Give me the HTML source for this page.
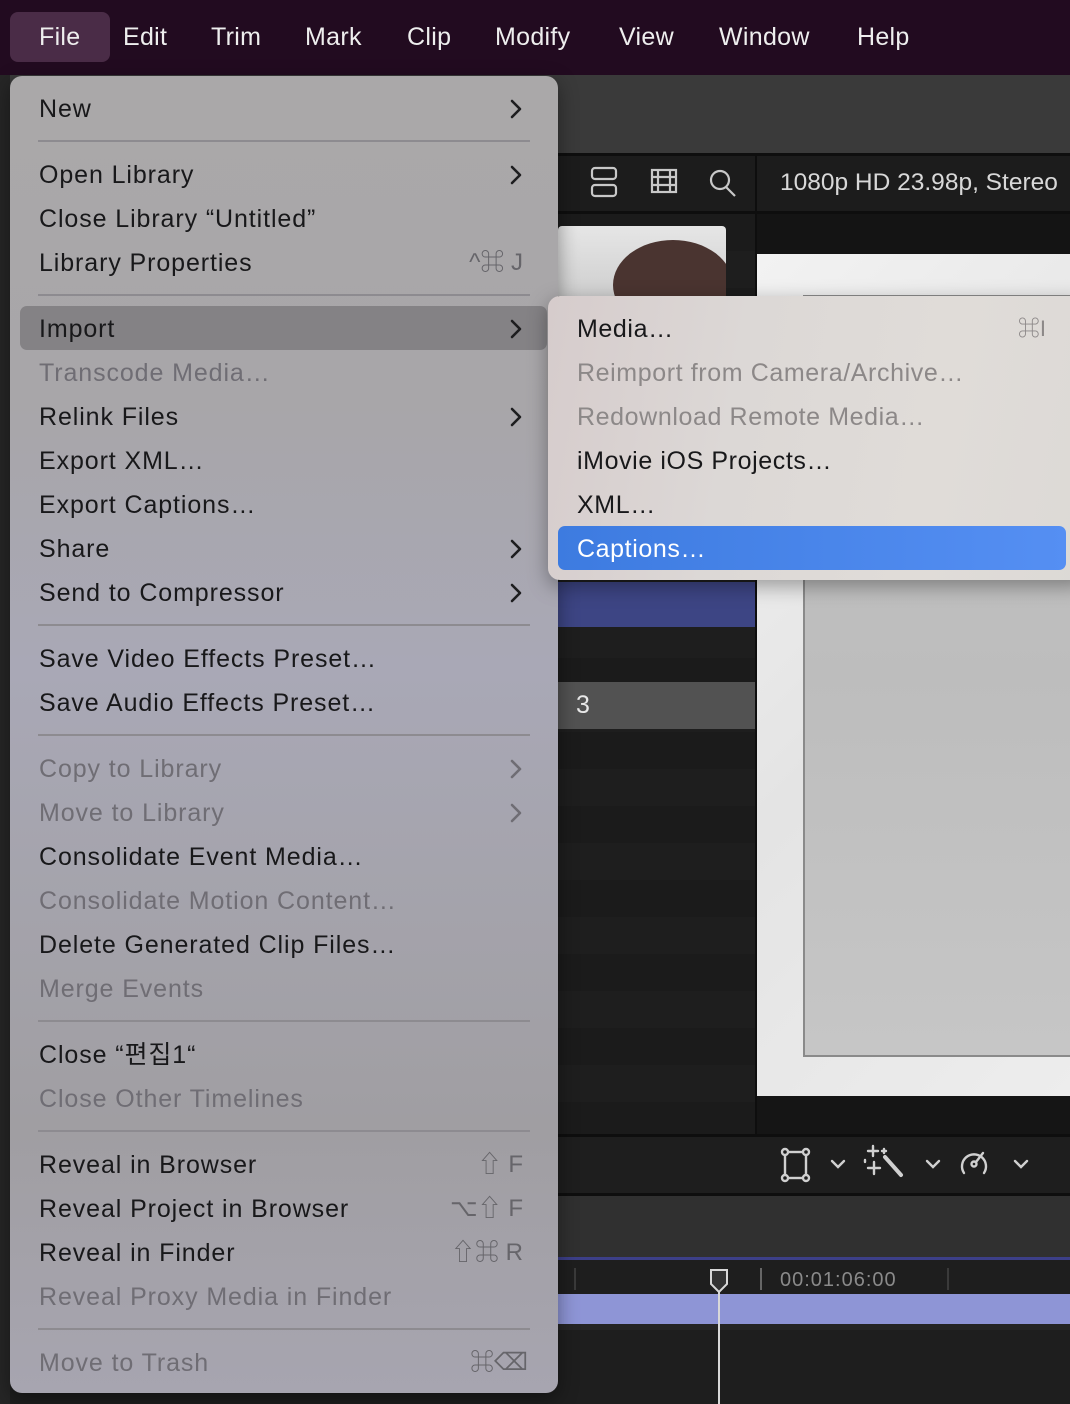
<!DOCTYPE html>
<html><head><meta charset="utf-8">
<style>
*{margin:0;padding:0;box-sizing:border-box}
body{width:1070px;height:1404px;overflow:hidden;position:relative;background:#1e1e1e;font-family:"Liberation Sans","Noto Sans CJK KR",sans-serif}
.a{position:absolute}
.mb{left:0;top:0;width:1070px;height:75px;background:#220b20}
.mb span{position:absolute;top:20px;color:#eee;font-size:25px;line-height:34px;letter-spacing:0.3px}
.menu{left:10px;top:76px;width:548px;height:1317px;border-radius:12px;background:linear-gradient(180deg,#aaa8a9 0%,#a8a6a9 25%,#a9a8b6 45%,#a5a4ad 60%,#a09ea2 80%,#a7a5b0 100%);box-shadow:0 6px 20px rgba(0,0,0,.4)}
.it{position:absolute;left:29px;font-size:25px;line-height:32px;color:#18181a;white-space:nowrap;letter-spacing:0.9px}
.d{color:#6f6d74}
.sep{position:absolute;left:28px;width:492px;height:2px;background:#8d8b90}
.sc{position:absolute;right:35px;font-size:24px;line-height:32px;color:#66656a;text-align:right;white-space:nowrap}
.sub{left:548px;top:296px;width:540px;height:284px;border-radius:12px;background:linear-gradient(100deg,#d6cccc 0%,#dcd8d6 35%,#e0dcd8 70%,#dcd9d6 100%);box-shadow:0 6px 20px rgba(0,0,0,.35)}
.si{position:absolute;left:29px;font-size:25px;line-height:32px;color:#18181a;white-space:nowrap;letter-spacing:0.6px}
.sd{color:#8c8888}
</style></head><body>

<div class="a" style="left:0;top:75px;width:1070px;height:78px;background:#3a3a3a"></div>
<div class="a" style="left:0;top:153px;width:1070px;height:3px;background:#0e0e0e"></div>
<div class="a" style="left:0;top:156px;width:755px;height:55px;background:#1c1c1c"></div>
<div class="a" style="left:755px;top:153px;width:2px;height:1040px;background:#0e0e0e"></div>
<div class="a" style="left:757px;top:156px;width:313px;height:55px;background:#1c1c1c"></div>
<div class="a" style="left:0;top:211px;width:1070px;height:3px;background:#0e0e0e"></div>
<div class="a" style="left:780px;top:166px;color:#d8d8d8;font-size:24.5px;line-height:34px;white-space:nowrap">1080p HD 23.98p, Stereo</div>
<svg class="a" style="left:585px;top:165px" width="160" height="36" viewBox="0 0 160 36" fill="none" stroke="#c8c8c8" stroke-width="2.2">
<rect x="7" y="3" width="24" height="11" rx="3"/><rect x="7" y="20" width="24" height="11" rx="3"/>
<rect x="67" y="5" width="24" height="22"/><line x1="73" y1="5" x2="73" y2="27"/><line x1="85" y1="5" x2="85" y2="27"/><line x1="67" y1="12" x2="91" y2="12"/><line x1="67" y1="20" x2="91" y2="20"/>
<circle cx="135" cy="15" r="9"/><line x1="141" y1="22" x2="150" y2="31"/>
</svg>
<div class="a" style="left:558px;top:214px;width:197px;height:980px;background:repeating-linear-gradient(180deg,#1b1b1b 0 37px,#1e1e1e 37px 74px)"></div>
<div class="a" style="left:558px;top:226px;width:168px;height:70px;background:linear-gradient(180deg,#e6e6e6,#cfcfcf);border-radius:4px 4px 0 0;overflow:hidden"><div class="a" style="left:55px;top:14px;width:120px;height:90px;border-radius:50%;background:#4a3430"></div></div>
<div class="a" style="left:558px;top:582px;width:197px;height:45px;background:#3d4584"></div>
<div class="a" style="left:558px;top:682px;width:197px;height:47px;background:#525252"></div>
<div class="a" style="left:576px;top:688px;color:#e8e8e8;font-size:25px;line-height:34px">3</div>
<div class="a" style="left:757px;top:214px;width:313px;height:40px;background:#141414"></div>
<div class="a" style="left:757px;top:254px;width:313px;height:842px;background:linear-gradient(135deg,#f2f2f2,#e4e4e4 50%,#ededed)"></div>
<div class="a" style="left:803px;top:295px;width:267px;height:762px;background:linear-gradient(180deg,#c4c4c4,#bdbdbd 50%,#c6c6c6);border:2px solid #8a8a8a;border-right:none"></div>
<div class="a" style="left:757px;top:1096px;width:313px;height:40px;background:#151515"></div>
<div class="a" style="left:0;top:1134px;width:1070px;height:3px;background:#0e0e0e"></div>
<div class="a" style="left:0;top:1137px;width:1070px;height:56px;background:#1e1e1e"></div>
<svg class="a" style="left:778px;top:1140px" width="260" height="50" viewBox="0 0 260 50" fill="none" stroke="#d0d0d0" stroke-width="2.4" stroke-linecap="round">
<rect x="7" y="12" width="21" height="26"/><circle cx="7" cy="12" r="3" fill="#1e1e1e"/><circle cx="28" cy="12" r="3" fill="#1e1e1e"/><circle cx="7" cy="38" r="3" fill="#1e1e1e"/><circle cx="28" cy="38" r="3" fill="#1e1e1e"/>
<path d="M54 21l6 6 6-6"/>
<path d="M107 17l16 18" stroke-width="4"/><path d="M95 6v10M90 11h10M96 22v12M90 28h12M106 9v4M104 11h4M87 20v2"/>
<path d="M149 21l6 6 6-6"/>
<path d="M186 33a12 12 0 1 1 20 0"/><circle cx="196" cy="24" r="2.5"/><path d="M198 22l7-9"/>
<path d="M237 21l6 6 6-6"/>
</svg>
<div class="a" style="left:0;top:1193px;width:1070px;height:3px;background:#0e0e0e"></div>
<div class="a" style="left:0;top:1196px;width:1070px;height:61px;background:#303030"></div>
<div class="a" style="left:0;top:1257px;width:1070px;height:3px;background:#3c3f88"></div>
<div class="a" style="left:0;top:1260px;width:1070px;height:34px;background:#1e1e1e"></div>
<div class="a" style="left:574px;top:1268px;width:2px;height:22px;background:#3a3a3a"></div>
<div class="a" style="left:760px;top:1268px;width:2px;height:22px;background:#666"></div>
<div class="a" style="left:947px;top:1268px;width:2px;height:22px;background:#3a3a3a"></div>
<div class="a" style="left:780px;top:1266px;color:#8a8a8a;font-size:20px;line-height:28px;letter-spacing:1px">00:01:06:00</div>
<div class="a" style="left:0;top:1294px;width:1070px;height:30px;background:#8e95d6"></div>
<div class="a" style="left:0;top:1324px;width:1070px;height:6px;background:#252525"></div>
<div class="a" style="left:718px;top:1290px;width:2px;height:114px;background:#d8d8d8"></div>
<svg class="a" style="left:709px;top:1268px" width="20" height="26" viewBox="0 0 20 26"><path d="M2 2h16v14l-8 8-8-8z" fill="#333" stroke="#d8d8d8" stroke-width="2"/></svg>
<div class="a" style="left:0;top:75px;width:10px;height:1329px;background:#262626"></div>

<div class="a mb">
<div class="a" style="left:10px;top:12px;width:100px;height:50px;border-radius:8px;background:#4a2c47"></div>
<span style="left:39px">File</span><span style="left:123px">Edit</span><span style="left:211px">Trim</span><span style="left:305px">Mark</span><span style="left:407px">Clip</span><span style="left:495px">Modify</span><span style="left:619px">View</span><span style="left:719px">Window</span><span style="left:857px">Help</span>
</div>

<div class="a menu">
<div class="a" style="left:10px;top:230px;width:527px;height:44px;border-radius:7px;background:#848285"></div>
<div class="it" style="top:17px">New</div>
<div class="sep" style="top:64px"></div>
<div class="it" style="top:83px">Open Library</div>
<div class="it" style="top:127px">Close Library “Untitled”</div>
<div class="it" style="top:171px">Library Properties</div><div class="sc" style="top:171px">^⌘ J</div>
<div class="sep" style="top:218px"></div>
<div class="it" style="top:237px">Import</div>
<div class="it d" style="top:281px">Transcode Media…</div>
<div class="it" style="top:325px">Relink Files</div>
<div class="it" style="top:369px">Export XML…</div>
<div class="it" style="top:413px">Export Captions…</div>
<div class="it" style="top:457px">Share</div>
<div class="it" style="top:501px">Send to Compressor</div>
<div class="sep" style="top:548px"></div>
<div class="it" style="top:567px">Save Video Effects Preset…</div>
<div class="it" style="top:611px">Save Audio Effects Preset…</div>
<div class="sep" style="top:658px"></div>
<div class="it d" style="top:677px">Copy to Library</div>
<div class="it d" style="top:721px">Move to Library</div>
<div class="it" style="top:765px">Consolidate Event Media…</div>
<div class="it d" style="top:809px">Consolidate Motion Content…</div>
<div class="it" style="top:853px">Delete Generated Clip Files…</div>
<div class="it d" style="top:897px">Merge Events</div>
<div class="sep" style="top:944px"></div>
<div class="it" style="top:963px">Close “편집1“</div>
<div class="it d" style="top:1007px">Close Other Timelines</div>
<div class="sep" style="top:1054px"></div>
<div class="it" style="top:1073px">Reveal in Browser</div><div class="sc" style="top:1073px">⇧ F</div>
<div class="it" style="top:1117px">Reveal Project in Browser</div><div class="sc" style="top:1117px">⌥⇧ F</div>
<div class="it" style="top:1161px">Reveal in Finder</div><div class="sc" style="top:1161px">⇧⌘ R</div>
<div class="it d" style="top:1205px">Reveal Proxy Media in Finder</div>
<div class="sep" style="top:1252px"></div>
<div class="it d" style="top:1271px">Move to Trash</div><div class="sc" style="top:1271px;right:30px">⌘⌫</div>
<svg class="a" style="left:0;top:0" width="548" height="1317" fill="none" stroke="#1d1d1f" stroke-width="2.6" stroke-linecap="round" stroke-linejoin="round">
<path d="M502 25l8 8-8 8"/><path d="M502 91l8 8-8 8"/><path d="M502 245l8 8-8 8"/><path d="M502 333l8 8-8 8"/><path d="M502 465l8 8-8 8"/><path d="M502 509l8 8-8 8"/>
<g stroke="#6f6d74"><path d="M502 685l8 8-8 8"/><path d="M502 729l8 8-8 8"/></g>
</svg>
</div>

<div class="a sub">
<div class="si" style="top:17px">Media…</div><div class="a" style="right:42px;top:17px;font-size:22px;line-height:32px;color:#8c8888">⌘I</div>
<div class="si sd" style="top:61px">Reimport from Camera/Archive…</div>
<div class="si sd" style="top:105px">Redownload Remote Media…</div>
<div class="si" style="top:149px">iMovie iOS Projects…</div>
<div class="si" style="top:193px">XML…</div>
<div class="a" style="left:10px;top:230px;width:508px;height:44px;border-radius:7px;background:linear-gradient(90deg,#3d7be0,#558ff3)"></div>
<div class="si" style="top:237px;color:#fff">Captions…</div>
</div>
</body></html>
